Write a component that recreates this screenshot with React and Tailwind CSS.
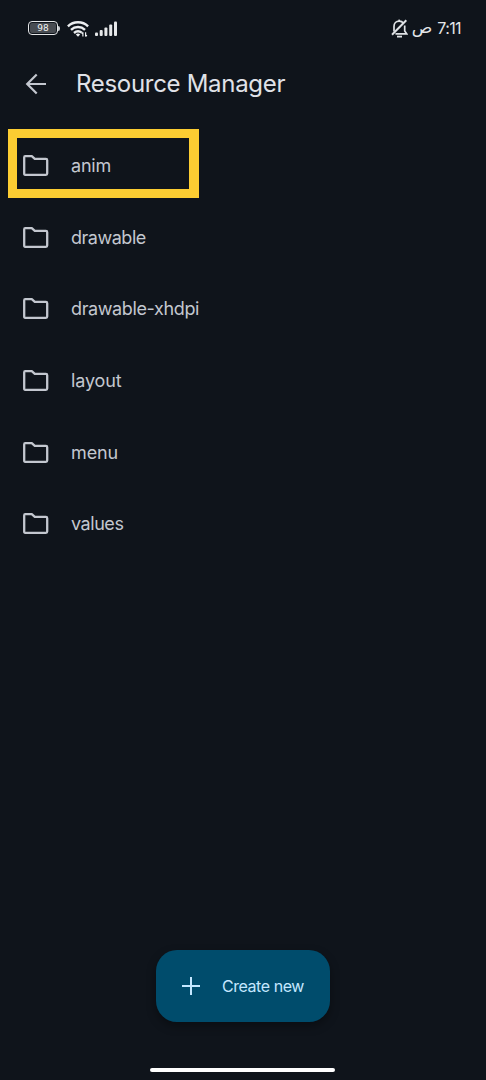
import React from 'react'

const folders = [
  { name: 'anim', tracking: 'tracking-[-0.2px]', selected: true },
  { name: 'drawable', tracking: 'tracking-[-0.48px]' },
  { name: 'drawable-xhdpi', tracking: 'tracking-[-0.38px]' },
  { name: 'layout', tracking: 'tracking-[-0.15px]' },
  { name: 'menu', tracking: 'tracking-[-0.1px]' },
  { name: 'values', tracking: 'tracking-[-0.45px]' },
]

const BatteryIcon = () => (
  <div className="flex items-center">
    <div className="flex h-[14px] w-[30px] rounded-[4px] border-[1.5px] border-[#e4e6e8] p-[1px]">
      <div className="flex flex-1 items-center justify-center rounded-[2px] bg-[#484c52] text-[9px] leading-none text-[#f1f2f3] font-['DejaVu_Sans',sans-serif]">
        98
      </div>
    </div>
    <div className="h-[5px] w-[2px] rounded-r-sm bg-[#c9ccd0]" />
  </div>
)

const WifiIcon = () => (
  <svg width="22" height="18" viewBox="0 0 22 18" fill="none" stroke="#eceef0" strokeWidth="2.4">
    <path d="M0.9 6.3C6.5 0.9 15.5 0.9 21.1 6.3" />
    <path d="M4 9.8C8 6.1 14 6.1 18 9.8" />
    <path d="M7 13C9.3 10.9 12.4 10.8 14.8 12.6" />
    <path d="M8.8 14.4C10 13.2 12 13.2 13.2 14.4L11 16.8Z" fill="#eceef0" stroke="none" />
    <path d="M15.9 16.5V12.3M14.6 13.6L15.9 12.3M18.6 12.3V16.5M19.9 15.2L18.6 16.5" strokeWidth="1.2" />
  </svg>
)

const SignalIcon = () => (
  <svg width="22" height="15" viewBox="0 0 22 15" fill="#e6e8ea">
    <rect x="0" y="11.5" width="3" height="3.5" rx="1" />
    <rect x="4.7" y="9" width="3" height="6" rx="1" />
    <rect x="9.4" y="6.5" width="3" height="8.5" rx="1" />
    <rect x="14.2" y="3.5" width="3" height="11.5" rx="1" />
    <rect x="19" y="0.5" width="3" height="14.5" rx="1" />
  </svg>
)

const BellOffIcon = () => (
  <svg width="17" height="19" viewBox="0 0 17 19" fill="none" stroke="#dfe2e5" strokeWidth="1.7">
    <path d="M3 12.5V7.5C3 4.3 5.2 2.2 8.2 2.2C10 2.2 11.5 2.9 12.4 4.2" />
    <path d="M13.7 6.5V12L15.7 14.8H4.5" />
    <path d="M1 15.8L15.3 1.2" strokeWidth="2" />
    <path d="M6 17.6H11" strokeWidth="1.8" />
    <path d="M8.2 2.2V0.6" />
  </svg>
)

const ArrowIcon = () => (
  <svg width="22" height="22" viewBox="0 0 22 22" fill="none" stroke="#c3c7cf" strokeWidth="2.2">
    <path d="M21 11H2.5M11.7 1.5L2.2 11L11.7 20.5" />
  </svg>
)

const FolderIcon = () => (
  <svg width="26" height="22" viewBox="0 0 26 22" fill="none" stroke="#c3c7cf" strokeWidth="2.3" strokeLinejoin="round">
    <path d="M2.2 1.2H8.8L11.8 3.9H22.9Q24.2 3.9 24.2 5.2V18.5Q24.2 19.8 22.9 19.8H2.2Q1.2 19.8 1.2 18.5V2.5Q1.2 1.2 2.2 1.2Z" />
  </svg>
)

const PlusIcon = () => (
  <svg width="18" height="18" viewBox="0 0 18 18" fill="none" stroke="#c4e7ff" strokeWidth="2">
    <path d="M9 0V18M0 9H18" />
  </svg>
)

const StatusBar = () => (
  <div className="flex h-14 items-center justify-between pl-7 pr-[25px] text-[#e4e6e8]">
    <div className="flex items-center">
      <BatteryIcon />
      <div className="ml-[7px] mt-[2px]">
        <WifiIcon />
      </div>
      <div className="ml-[6px] mt-[1px]">
        <SignalIcon />
      </div>
    </div>
    <div className="flex items-center">
      <BellOffIcon />
      <span className="ml-1 mb-[3px] text-[17px] leading-5 font-['DejaVu_Sans',sans-serif]">ص</span>
      <span className="ml-[5px] text-[16px] leading-5 tracking-[-0.6px]">7:11</span>
    </div>
  </div>
)

const FolderRow = ({ folder }) => (
  <li className="flex h-[71.6px] items-center pl-2">
    <div
      className={
        folder.selected
          ? 'flex h-[69px] w-[191px] items-center border-y-9 border-l-9 border-r-10 border-[#fccd32] pl-[6px] pt-1'
          : 'flex items-center pl-[15px] pt-[5px]'
      }
    >
      <FolderIcon />
      <span className={`ml-[22px] whitespace-nowrap text-[18px] leading-6 text-[#c3c7cf] ${folder.tracking}`}>
        {folder.name}
      </span>
    </div>
  </li>
)

const App = () => {
  return (
    <div className="flex h-[1080px] w-[486px] flex-col overflow-hidden bg-[#0f141b] font-['Inter',sans-serif]">
      <StatusBar />
      <header className="flex h-14 items-center pl-[25px]">
        <ArrowIcon />
        <h1 className="ml-[29px] whitespace-nowrap text-[24px] leading-8 tracking-[-0.3px] text-[#e0e2e8]">Resource Manager</h1>
      </header>
      <ul className="mt-4 flex-1">
        {folders.map((folder) => (
          <FolderRow key={folder.name} folder={folder} />
        ))}
      </ul>
      <div className="flex justify-center">
        <button className="flex h-[72px] w-[174px] items-center rounded-[21px] bg-[#004c6c] pl-[26px] text-[#c4e7ff] shadow-[0_4px_10px_rgba(0,0,0,0.35)]">
          <PlusIcon />
          <span className="ml-[22px] whitespace-nowrap text-[16px] leading-6 tracking-[-0.45px]">Create new</span>
        </button>
      </div>
      <div className="mb-2 mt-[46px] flex justify-center pr-px">
        <div className="h-1 w-[185px] rounded-full bg-white" />
      </div>
    </div>
  )
}

export default App
